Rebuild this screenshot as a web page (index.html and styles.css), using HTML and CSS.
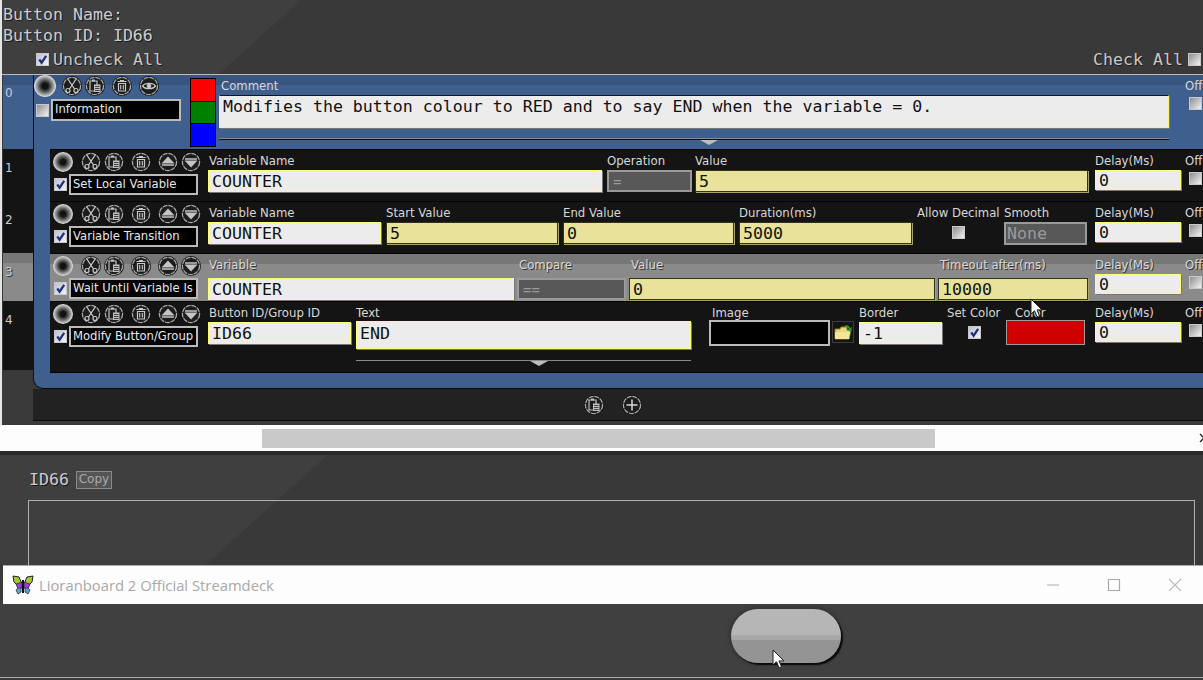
FILE: index.html
```html
<!DOCTYPE html>
<html lang="en">
<head>
    <meta charset="UTF-8">
    <title>Lioranboard 2 Button Editor</title>
    <link rel="stylesheet" href="styles.css">
</head>
<body>
    <svg class="defs" width="0" height="0">
        <defs>
            <symbol id="ring" viewBox="0 0 20 20">
                <circle cx="10" cy="10" r="10" fill="#0c0c0c"/>
                <circle cx="10" cy="10" r="8.6" fill="#1d1d1d" stroke="#a8a8a8" stroke-width="1.3" stroke-dasharray="5 .8"/>
            </symbol>
            <symbol id="cut" viewBox="0 0 20 20">
                <use href="#ring"/>
                <path d="M5.5 2.5 12.5 13M14.5 2.5 7.5 13" stroke="#c8c8c8" stroke-width="1.3" fill="none"/>
                <circle cx="6" cy="14.5" r="2" stroke="#c8c8c8" stroke-width="1.2" fill="none"/>
                <circle cx="14" cy="14.5" r="2" stroke="#c8c8c8" stroke-width="1.2" fill="none"/>
            </symbol>
            <symbol id="paste" viewBox="0 0 20 20">
                <use href="#ring"/>
                <path d="M5 5h7v10H5z" fill="none" stroke="#c0c0c0" stroke-width="1.2"/>
                <path d="M7 3.5h3v2H7z" fill="#c0c0c0"/>
                <path d="M9 8.5h6.5v7.5H9z" fill="#c0c0c0"/>
                <path d="M10 10.5h4.5M10 12.5h4.5M10 14.5h4.5" stroke="#222" stroke-width=".8"/>
            </symbol>
            <symbol id="trash" viewBox="0 0 20 20">
                <use href="#ring"/>
                <path d="M6.5 7.5h7V15h-7z" fill="none" stroke="#c8c8c8" stroke-width="1.2"/>
                <path d="M5.5 5.5h9M8 4.5h4M8.7 9v4.5M11.3 9v4.5" stroke="#c8c8c8" stroke-width="1.1"/>
            </symbol>
            <symbol id="eye" viewBox="0 0 20 20">
                <use href="#ring"/>
                <path d="M3.5 10C6 6.5 14 6.5 16.5 10 14 13.5 6 13.5 3.5 10z" fill="none" stroke="#c8c8c8" stroke-width="1.3"/>
                <circle cx="10" cy="10" r="2.3" fill="#c8c8c8"/>
            </symbol>
            <symbol id="up" viewBox="0 0 20 20">
                <use href="#ring"/>
                <path d="M10 4.5 16.5 11.5H3.5z" fill="#c4c4c4"/>
                <path d="M4 13h12" stroke="#c4c4c4" stroke-width="1.5"/>
            </symbol>
            <symbol id="down" viewBox="0 0 20 20">
                <use href="#ring"/>
                <path d="M10 15.5 16.5 8.5H3.5z" fill="#c4c4c4"/>
                <path d="M4 7h12" stroke="#c4c4c4" stroke-width="1.5"/>
            </symbol>
            <symbol id="plus" viewBox="0 0 20 20">
                <use href="#ring"/>
                <path d="M10 4.5v11M4.5 10h11" stroke="#d8d8d8" stroke-width="1.5"/>
            </symbol>
            <symbol id="tick" viewBox="0 0 12 12">
                <path d="M2.5 6 5 9.5 10 2" fill="none" stroke="#1f2f78" stroke-width="2.4"/>
            </symbol>
            <symbol id="arrow" viewBox="0 0 14 20">
                <path d="M1 1v15l3.500-3.300 2.500 6 2.500-1-2.500-5.800H12z" fill="#fff" stroke="#222" stroke-width="1"/>
            </symbol>
        </defs>
    </svg>

    <div class="editor">
        <div class="editor-head">
            <div class="mono-line">Button Name:</div>
            <div class="mono-line">Button ID: ID66</div>
            <div class="check-all">
                <label class="check-label"><span class="check on"><svg><use href="#tick"/></svg></span>Uncheck All</label>
                <label class="check-label">Check All<span class="check"></span></label>
            </div>
        </div>

        <div class="list">
            <div class="index">
                <div class="idx idx-info">0</div>
                <div class="idx idx-std">1</div>
                <div class="idx idx-std">2</div>
                <div class="idx idx-wait">3</div>
                <div class="idx idx-last">4</div>
            </div>

            <div class="main">
                <div class="panel">
                    <div class="info-row">
                        <div class="info-tools">
                            <div class="icons">
                                <span class="knob knob-big"></span>
                                <svg class="ic ic-cut-big"><use href="#cut"/></svg>
                                <svg class="ic"><use href="#paste"/></svg>
                                <svg class="ic ic-wide"><use href="#trash"/></svg>
                                <svg class="ic ic-wide"><use href="#eye"/></svg>
                            </div>
                            <div class="name-row">
                                <span class="check"></span>
                                <div class="name name-big">Information</div>
                            </div>
                        </div>
                        <div class="swatches">
                            <span class="swatch swatch-red"></span>
                            <span class="swatch swatch-green"></span>
                            <span class="swatch swatch-blue"></span>
                        </div>
                        <div class="comment">
                            <div class="label">Comment</div>
                            <div class="box box-comment">Modifies the button colour to RED and to say END when the variable = 0.</div>
                            <div class="rule"></div>
                        </div>
                        <div class="off off-info">
                            <div class="label">Off</div>
                            <span class="check"></span>
                        </div>
                    </div>

                    <div class="actions">
                        <div class="action">
                            <div class="tools">
                                <div class="icons">
                                    <span class="knob"></span>
                                    <svg class="ic ic-cut"><use href="#cut"/></svg>
                                    <svg class="ic"><use href="#paste"/></svg>
                                    <svg class="ic ic-wide"><use href="#trash"/></svg>
                                    <svg class="ic ic-wide"><use href="#up"/></svg>
                                    <svg class="ic"><use href="#down"/></svg>
                                </div>
                                <div class="name-row">
                                    <span class="check on"><svg><use href="#tick"/></svg></span>
                                    <div class="name">Set Local Variable</div>
                                </div>
                            </div>
                            <div class="fields fields-set">
                                <div class="field"><div class="label">Variable Name</div><div class="box box-white">COUNTER</div></div>
                                <div class="field field-tight"><div class="label">Operation</div><div class="box box-off">=</div></div>
                                <div class="field"><div class="label">Value</div><div class="box box-yellow">5</div></div>
                            </div>
                            <div class="delay"><div class="label">Delay(Ms)</div><div class="box box-white box-delay">0</div></div>
                            <div class="off"><div class="label">Off</div><span class="check"></span></div>
                        </div>

                        <div class="action">
                            <div class="tools">
                                <div class="icons">
                                    <span class="knob"></span>
                                    <svg class="ic ic-cut"><use href="#cut"/></svg>
                                    <svg class="ic"><use href="#paste"/></svg>
                                    <svg class="ic ic-wide"><use href="#trash"/></svg>
                                    <svg class="ic ic-wide"><use href="#up"/></svg>
                                    <svg class="ic"><use href="#down"/></svg>
                                </div>
                                <div class="name-row">
                                    <span class="check on"><svg><use href="#tick"/></svg></span>
                                    <div class="name">Variable Transition</div>
                                </div>
                            </div>
                            <div class="fields fields-transition">
                                <div class="field"><div class="label">Variable Name</div><div class="box box-white">COUNTER</div></div>
                                <div class="field"><div class="label">Start Value</div><div class="box box-yellow">5</div></div>
                                <div class="field"><div class="label">End Value</div><div class="box box-yellow">0</div></div>
                                <div class="field"><div class="label">Duration(ms)</div><div class="box box-yellow">5000</div></div>
                                <div class="field field-check field-decimal"><div class="label">Allow Decimal</div><span class="check check-field"></span></div>
                                <div class="field"><div class="label">Smooth</div><div class="box box-off box-none">None</div></div>
                            </div>
                            <div class="delay"><div class="label">Delay(Ms)</div><div class="box box-white box-delay">0</div></div>
                            <div class="off"><div class="label">Off</div><span class="check"></span></div>
                        </div>

                        <div class="action action-wait">
                            <div class="tools">
                                <div class="icons">
                                    <span class="knob"></span>
                                    <svg class="ic ic-cut"><use href="#cut"/></svg>
                                    <svg class="ic"><use href="#paste"/></svg>
                                    <svg class="ic ic-wide"><use href="#trash"/></svg>
                                    <svg class="ic ic-wide"><use href="#up"/></svg>
                                    <svg class="ic"><use href="#down"/></svg>
                                </div>
                                <div class="name-row">
                                    <span class="check on"><svg><use href="#tick"/></svg></span>
                                    <div class="name">Wait Until Variable Is</div>
                                </div>
                            </div>
                            <div class="fields fields-wait">
                                <div class="field field-tight"><div class="label">Variable</div><div class="box box-white">COUNTER</div></div>
                                <div class="field field-tight"><div class="label">Compare</div><div class="box box-off">==</div></div>
                                <div class="field field-tight"><div class="label">Value</div><div class="box box-yellow">0</div></div>
                                <div class="field"><div class="label">Timeout after(ms)</div><div class="box box-yellow">10000</div></div>
                            </div>
                            <div class="delay"><div class="label">Delay(Ms)</div><div class="box box-white box-delay">0</div></div>
                            <div class="off"><div class="label">Off</div><span class="check"></span></div>
                        </div>

                        <div class="action action-last">
                            <div class="tools">
                                <div class="icons">
                                    <span class="knob"></span>
                                    <svg class="ic ic-cut"><use href="#cut"/></svg>
                                    <svg class="ic"><use href="#paste"/></svg>
                                    <svg class="ic ic-wide"><use href="#trash"/></svg>
                                    <svg class="ic ic-wide"><use href="#up"/></svg>
                                    <svg class="ic"><use href="#down"/></svg>
                                </div>
                                <div class="name-row">
                                    <span class="check on"><svg><use href="#tick"/></svg></span>
                                    <div class="name">Modify Button/Group</div>
                                </div>
                            </div>
                            <div class="fields fields-modify">
                                <div class="field"><div class="label">Button ID/Group ID</div><div class="box box-white">ID66</div></div>
                                <div class="field field-text">
                                    <div class="label">Text</div>
                                    <div class="box box-white box-tall">END</div>
                                    <div class="rule rule-dark"></div>
                                </div>
                                <div class="field">
                                    <div class="label label-image">Image</div>
                                    <div class="image-row">
                                        <div class="name image-box"></div>
                                        <span class="folder">
                                            <svg viewBox="0 0 20 20"><path d="M2 7h5l1-2h6v3h4l-2 9H2z" fill="#e8d87a" stroke="#8a7a20"/><path d="M2 10h15l-1 7H2z" fill="#f2e69a"/><path d="M10 5c3-3 6-2 7 1l2-1-1 5-4-2 2-1c-1-2-4-3-6-2z" fill="#2e9a2e"/></svg>
                                        </span>
                                    </div>
                                </div>
                                <div class="field"><div class="label">Border</div><div class="box box-white">-1</div></div>
                                <div class="field field-check field-setcolor"><div class="label">Set Color</div><span class="check check-field on"><svg><use href="#tick"/></svg></span></div>
                                <div class="field"><div class="label label-color">Color</div><div class="color-box"></div></div>
                            </div>
                            <div class="delay"><div class="label">Delay(Ms)</div><div class="box box-white box-delay">0</div></div>
                            <div class="off"><div class="label">Off</div><span class="check"></span></div>
                        </div>
                    </div>
                </div>

                <div class="add-bar">
                    <svg class="ic"><use href="#paste"/></svg>
                    <svg class="ic"><use href="#plus"/></svg>
                </div>
            </div>
        </div>
    </div>

    <div class="hscroll">
        <div class="hscroll-thumb"></div>
        <svg class="hscroll-arrow" viewBox="0 0 6 10"><path d="M1 1l4 4-4 4" fill="none" stroke="#222" stroke-width="1.3"/></svg>
    </div>

    <div class="id-panel">
        <div class="id-row">
            <span class="mono-line">ID66</span>
            <span class="copy">Copy</span>
        </div>
        <div class="id-box"></div>
    </div>

    <div class="window-bar">
        <svg class="butterfly" viewBox="0 0 22 20">
            <path d="M10 9 7 2 1 1l1 6 3 3z" fill="#a8c832" stroke="#222"/>
            <path d="M12 9l3-7 6-1-1 6-3 3z" fill="#a8c832" stroke="#222"/>
            <path d="M10 7 4 9l2 5 4-1zM12 7l6 2-2 5-4-1z" fill="#9a3fd8" stroke="#222" stroke-width=".7"/>
            <path d="M9 13 6 13l-2 2 2 4 3-2zM13 13l3 0 2 2-2 4-3-2z" fill="#5a9fe0" stroke="#333" stroke-width=".8"/>
            <path d="M11 5v13" stroke="#111" stroke-width="2"/>
        </svg>
        <span class="window-title">Lioranboard 2 Official Streamdeck</span>
        <div class="window-controls">
            <svg viewBox="0 0 14 14"><path d="M1 7h12" stroke="#bbb" stroke-width="1.2"/></svg>
            <svg viewBox="0 0 14 14"><path d="M1.5 1.5h11v11h-11z" fill="none" stroke="#aaa" stroke-width="1.2"/></svg>
            <svg viewBox="0 0 14 14"><path d="M1 1l12 12M13 1 1 13" stroke="#bbb" stroke-width="1.1"/></svg>
        </div>
    </div>

    <div class="deck">
        <div class="deck-button"></div>
    </div>

    <!-- mouse pointers caught in the capture -->
    <svg class="pointer pointer-top"><use href="#arrow"/></svg>
    <svg class="pointer pointer-deck"><use href="#arrow"/></svg>
</body>
</html>
```

FILE: styles.css
```css
html, body {
    margin: 0;
    height: 100%;
}

body {
    position: relative;
    width: 1203px;
    height: 680px;
    overflow: hidden;
    background: #3a3a3a;
    color: #ddd;
    font-family: "DejaVu Sans", sans-serif;
    font-size: 12px;
}

.defs {
    position: absolute;
}

.mono-line {
    font-family: "DejaVu Sans Mono", monospace;
    font-size: 16.6px;
    line-height: 21px;
    color: #ccc;
    text-shadow: 1px 1px 0 #1a1a1a;
}

/* Top editor */
.editor {
    height: 425px;
    border-left: 2px solid #e4e4e4;
    background: #3a3a3a;
}

.editor-head {
    box-sizing: border-box;
    height: 75px;
    padding: 4px 0 0 1px;
    border-bottom: 1px solid #bdbdbd;
    background: linear-gradient(138deg, #3f3f3f 200px, #393939 200px);
}

.check-all {
    display: flex;
    justify-content: space-between;
    padding: 3px 2px 0 33px;
}

.check-label {
    display: flex;
    align-items: center;
    gap: 4px;
    font-family: "DejaVu Sans Mono", monospace;
    font-size: 16.6px;
    line-height: 21px;
    color: #c8c8c8;
    text-shadow: 1px 1px 0 #1a1a1a;
}

.check-label + .check-label {
    gap: 5px;
}

.check {
    display: block;
    flex: none;
    box-sizing: border-box;
    width: 13px;
    height: 13px;
    border: 1px solid #c9c9c9;
    background: linear-gradient(135deg, #8f8f8f, #f2f2f2);
}

.check.on {
    background: linear-gradient(135deg, #b9bfd8, #f4f4f4);
}

.check svg {
    display: block;
    width: 11px;
    height: 11px;
}

.list {
    display: flex;
    margin-left: 1px;
}

/* Numbered column */
.index {
    flex: none;
    width: 30px;
}

.idx {
    box-sizing: border-box;
    padding: 12px 0 0 2px;
    color: #ccc;
    font-size: 12px;
    line-height: 14px;
}

.idx-info {
    height: 74px;
    padding-top: 11px;
    background: linear-gradient(#37557e 10px, #3f608f 10px);
}

.idx-std {
    height: 52px;
    background: #141414;
}

.idx-wait {
    height: 48px;
    background: linear-gradient(#777 10px, #8a8a8a 10px);
    text-shadow: 1px 1px 0 #333;
}

.idx-last {
    height: 69px;
    background: #141414;
}

/* Blue panel */
.main {
    flex: none;
    width: 1170px;
}

.panel {
    box-sizing: border-box;
    height: 314px;
    padding-bottom: 15px;
    border-left: 1px solid #111;
    border-bottom: 1px solid #0a0a0a;
    border-bottom-left-radius: 10px;
    background: linear-gradient(#37557e 10px, #3f608f 10px);
}

.info-row {
    display: flex;
    height: 74px;
}

.info-tools {
    flex: none;
    width: 156px;
}

.info-tools .name-row {
    margin-top: 2px;
}

.icons {
    display: flex;
    align-items: center;
    height: 22px;
}

.ic {
    display: block;
    flex: none;
    width: 20px;
    height: 20px;
    margin-left: 3px;
}

.ic-cut {
    margin-left: 8px;
}

.ic-cut-big {
    margin-left: 6px;
}

.ic-wide {
    margin-left: 7px;
}

.knob {
    display: block;
    flex: none;
    width: 20px;
    height: 20px;
    border-radius: 50%;
    background: radial-gradient(circle, #111 18%, #6a6a6a 42%, #d8d8d8 68%, #777 82%, #111 100%);
}

.knob-big {
    width: 22px;
    height: 22px;
}

.name-row {
    display: flex;
    align-items: center;
    gap: 2px;
    margin: 1px 0 0 2px;
}

.name {
    box-sizing: border-box;
    width: 129px;
    height: 21px;
    padding: 1px 0 0 2px;
    border: 2px solid #bbb;
    background: #000;
    color: #e8e8e8;
    font-size: 11.6px;
    line-height: 15px;
    white-space: nowrap;
    overflow: hidden;
}

.name-big {
    width: 130px;
    height: 22px;
}

.swatches {
    flex: none;
    display: flex;
    flex-direction: column;
    width: 26px;
    margin-top: 3px;
    height: 69px;
    background: #000;
    border: 1px solid #000;
    box-sizing: border-box;
    gap: 1px;
}

.swatch {
    flex: 1;
}

.swatch-red { background: #f00; }
.swatch-green { background: #008000; }
.swatch-blue { background: #00f; }

.comment {
    flex: none;
    width: 950px;
    margin-left: 3px;
    padding-top: 3px;
}

.comment .label {
    padding-left: 2px;
}

.box {
    box-sizing: border-box;
    height: 22px;
    margin-top: 1px;
    padding-left: 3px;
    font-family: "DejaVu Sans Mono", monospace;
    font-size: 16.6px;
    line-height: 22px;
    color: #111;
    white-space: nowrap;
    overflow: hidden;
}

.box-comment {
    height: 33px;
    margin-top: 1px;
    border: 1px solid #f5f57a;
    border-top-color: #151515;
    box-shadow: 1px 1px 0 #777;
    background: #ececec;
    line-height: 22px;
}

.box-white {
    border: 1px solid #ffff70;
    box-shadow: 1px 1px 0 #777;
    background: #ececec;
}

.box-yellow {
    border: 1px solid #34331c;
    box-shadow: 1px 1px 0 #a8a568;
    background: #e8e29a;
}

.box-off {
    border: 2px solid #9a9a9a;
    background: #585858;
    color: #9b9b9b;
    padding-left: 4px;
    line-height: 20px;
    font-size: 14px;
}

.box-none {
    height: 23px;
    font-size: 16.6px;
    line-height: 19px;
    padding-left: 1px;
}

.box-delay {
    width: 86px;
    height: 20px;
    line-height: 20px;
}

.box-tall {
    height: 28px;
    margin-top: 0;
    line-height: 24px;
}

.label {
    height: 16px;
    line-height: 16px;
    font-size: 11.7px;
    color: #d8d8d8;
    white-space: nowrap;
}

.rule {
    position: relative;
    height: 0;
    margin-top: 11px;
    border-top: 1px solid #111;
    box-shadow: 0 -1px 0 #8a8a8a;
}

.rule::after {
    content: "";
    position: absolute;
    left: 481px;
    top: 0;
    border-style: solid;
    border-width: 5px 9px 0;
    border-color: #bdbdbd transparent transparent;
}

.rule-dark {
    margin-top: 11px;
    border-top: 1px solid #8a8a8a;
    box-shadow: none;
}

.rule-dark::after {
    left: 174px;
}

.off {
    flex: none;
    padding-top: 3px;
}

.off .check {
    margin: 3px 0 0 4px;
}

.off-info {
    margin-left: 16px;
}

/* Action rows */
.actions {
    margin-left: 16px;
    background: #141414;
}

.action {
    box-sizing: border-box;
    display: flex;
    height: 52px;
    border-top: 1px solid #050505;
}

.action-wait {
    height: 48px;
    background: linear-gradient(#777 10px, #8a8a8a 10px);
}

.action-wait .label {
    text-shadow: 1px 1px 0 #333;
}

.action-wait .fields .label {
    padding-left: 2px;
}

.action-wait .fields .box {
    margin-top: 5px;
}

.action-last {
    height: 72px;
    border-bottom: 1px solid #050505;
}

.tools {
    flex: none;
    width: 158px;
    padding: 1px 0 0 3px;
    box-sizing: border-box;
}

.tools .name-row {
    margin: 1px 0 0 1px;
}

.fields {
    flex: none;
    display: grid;
    align-content: start;
    justify-content: start;
    width: 887px;
    padding-top: 3px;
}

.fields-set { grid-template-columns: 399px 88px 398px; }
.fields-transition { grid-template-columns: 178px 177px 176px 178px 87px 88px; }
.fields-wait { grid-template-columns: 309px 112px 309px 155px; }
.fields-modify { grid-template-columns: 148px 353px 150px 88px 59px 85px; }

.field {
    min-width: 0;
    padding-right: 5px;
}

.field:first-child .label {
    padding-left: 1px;
}

.field-tight {
    padding-right: 3px;
}

.field-check {
    padding-right: 0;
}

.field-decimal .check {
    margin-left: 35px;
}

.field-setcolor .check {
    margin-left: 21px;
}

.field-text {
    padding-right: 18px;
}

.check-field {
    margin-top: 5px;
}

.label-image {
    padding-left: 3px;
}

.label-color {
    padding-left: 9px;
}

.image-row {
    display: flex;
    align-items: flex-start;
    gap: 2px;
    margin-top: -1px;
}

.image-box {
    width: 121px;
    height: 26px;
}

.folder {
    box-sizing: border-box;
    display: block;
    width: 22px;
    height: 22px;
    margin-top: 1px;
    border: 1px solid #3c3c3c;
}

.folder svg {
    display: block;
    width: 20px;
    height: 20px;
}

.color-box {
    box-sizing: border-box;
    height: 25px;
    margin-top: -1px;
    margin-right: 1px;
    border: 1px solid #9a9a9a;
    background: #cf0000;
}

.delay {
    flex: none;
    width: 90px;
    padding-top: 3px;
}

.add-bar {
    box-sizing: border-box;
    display: flex;
    justify-content: center;
    align-items: center;
    gap: 18px;
    height: 32px;
    padding-right: 10px;
    border-bottom: 1px solid #0a0a0a;
    background: #222;
}

.add-bar .ic {
    margin-left: 0;
}

/* Horizontal scrollbar */
.hscroll {
    display: flex;
    align-items: center;
    height: 26px;
    padding-left: 262px;
    background: #fdfdfd;
}

.hscroll-thumb {
    flex: none;
    width: 673px;
    height: 19px;
    background: #c9c9c9;
}

.hscroll-arrow {
    flex: none;
    width: 6px;
    height: 10px;
    margin-left: 264px;
}

/* Button id panel */
.id-panel {
    box-sizing: border-box;
    height: 114px;
    padding: 14px 8px 0 28px;
    overflow: hidden;
    border-top: 4px solid #2a2a2a;
    background: linear-gradient(138deg, #3f3f3f 219px, #393939 219px);
}

.id-row {
    display: flex;
    align-items: center;
    gap: 7px;
    height: 21px;
    padding-left: 1px;
}

.copy {
    box-sizing: border-box;
    width: 36px;
    height: 18px;
    border: 1px solid #8a8a8a;
    background: #555;
    color: #aaa;
    font-size: 12px;
    line-height: 15px;
    text-align: center;
}

.id-box {
    height: 80px;
    margin-top: 10px;
    border: 1px solid #b0b0b0;
}

/* Window title bar */
.window-bar {
    display: flex;
    align-items: center;
    box-sizing: border-box;
    height: 39px;
    margin-left: 3px;
    padding-left: 9px;
    border-top: 1px solid #aaa;
    background: #fdfdfd;
}

.butterfly {
    flex: none;
    width: 22px;
    height: 20px;
}

.window-title {
    margin-left: 5px;
    color: #a9a9a9;
    font-family: "Open Sans", sans-serif;
    font-size: 14.8px;
}

.window-controls {
    display: flex;
    gap: 47px;
    margin-left: auto;
    padding-right: 21px;
}

.window-controls svg {
    display: block;
    width: 14px;
    height: 14px;
}

/* Stream deck preview */
.deck {
    box-sizing: border-box;
    height: 74px;
    padding: 5px 0 0 731px;
    border-bottom: 1px solid #aaa;
    background: #404040;
}

.deck-button {
    width: 110px;
    height: 54px;
    border-radius: 27px;
    background: linear-gradient(#b6b6b6 48%, #a8a8a8 48%, #a8a8a8 57%, #949494 57%);
    box-shadow: 2px 2px 1px #0c0c0c, 0 0 5px #262626;
}

.pointer {
    position: absolute;
    width: 14px;
    height: 20px;
}

.pointer-top {
    left: 1030px;
    top: 298px;
}

.pointer-deck {
    left: 772px;
    top: 649px;
}
```
